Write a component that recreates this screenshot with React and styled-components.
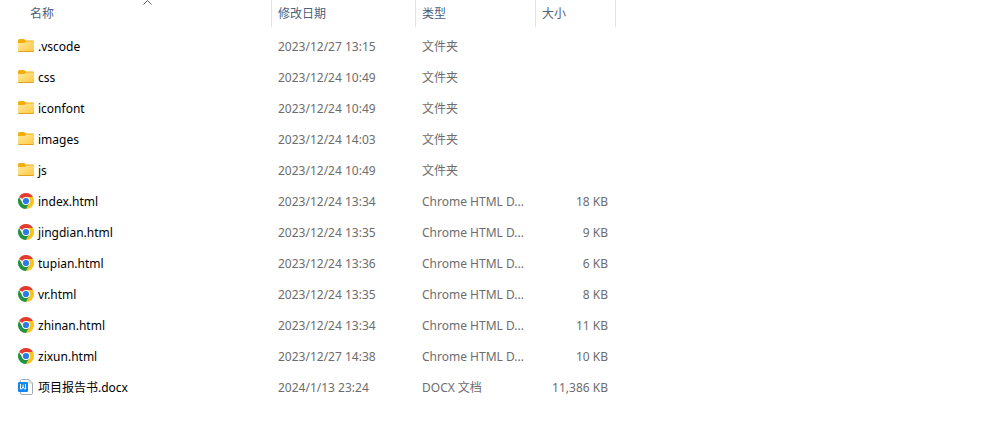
import React from "react";
import styled, { createGlobalStyle } from "styled-components";

const files = [
  { name: ".vscode", date: "2023/12/27 13:15", kind: "folder" },
  { name: "css", date: "2023/12/24 10:49", kind: "folder" },
  { name: "iconfont", date: "2023/12/24 10:49", kind: "folder" },
  { name: "images", date: "2023/12/24 14:03", kind: "folder" },
  { name: "js", date: "2023/12/24 10:49", kind: "folder" },
  { name: "index.html", date: "2023/12/24 13:34", kind: "html", size: "18 KB" },
  { name: "jingdian.html", date: "2023/12/24 13:35", kind: "html", size: "9 KB" },
  { name: "tupian.html", date: "2023/12/24 13:36", kind: "html", size: "6 KB" },
  { name: "vr.html", date: "2023/12/24 13:35", kind: "html", size: "8 KB" },
  { name: "zhinan.html", date: "2023/12/24 13:34", kind: "html", size: "11 KB" },
  { name: "zixun.html", date: "2023/12/27 14:38", kind: "html", size: "10 KB" },
  { name: "项目报告书.docx", date: "2024/1/13 23:24", kind: "docx", size: "11,386 KB" },
];

const FolderIcon = () => (
  <Icon viewBox="0 0 16 16" aria-hidden="true">
    <defs>
      <linearGradient id="folder" x1="0" y1="0" x2="1" y2="1">
        <stop offset="0" stopColor="#ffe8a0" />
        <stop offset="1" stopColor="#fdc93f" />
      </linearGradient>
    </defs>
    <path d="M0 2.5Q0 1 1.5 1H6L8 2.5H15Q16 2.5 16 3.5V7H0Z" fill="#f4ae0c" />
    <path d="M0 5H6.5L8.5 3.5H16V13Q16 14 15 14H1Q0 14 0 13Z" fill="url(#folder)" />
    <path d="M0 12.6Q0 14 1.2 14H14.8Q16 14 16 12.6Q15.8 13 15 13H1Q0.2 13 0 12.6Z" fill="#e5a01c" />
  </Icon>
);

const ChromeIcon = () => (
  <Icon viewBox="0 0 16 16" aria-hidden="true">
    <path d="M8 8L1.07 4A8 8 0 0 1 14.93 4Z" fill="#e33b2e" />
    <path d="M8 4H14.93A8 8 0 0 1 8 16L11.46 10Z" fill="#fcc31e" />
    <path d="M1.07 4L4.54 10L8 12L11.46 10L8 16A8 8 0 0 1 1.07 4Z" fill="#229342" />
    <circle cx="8" cy="8" r="4" fill="#fff" />
    <circle cx="8" cy="8" r="3.1" fill="#2a7bea" />
  </Icon>
);

const DocIcon = () => (
  <Icon viewBox="0 0 16 16" aria-hidden="true">
    <path
      d="M3.5 .5H11L14.5 4V14Q14.5 15.5 13 15.5H4Q2.5 15.5 2.5 14V1.5Q2.5 .5 3.5 .5Z"
      fill="#fff"
      stroke="#a3abb8"
    />
    <path d="M11 .5V4H14.5" fill="none" stroke="#c3c9d2" />
    <rect x="0" y="3" width="10" height="10" rx="1" fill="#1587f2" />
    <path d="M2.5 5V10H3.5L5 8L6.5 10H7.5V5M5 5.5V8" fill="none" stroke="#fff" />
  </Icon>
);

const kinds = {
  folder: { label: "文件夹", icon: FolderIcon },
  html: { label: "Chrome HTML D...", icon: ChromeIcon },
  docx: { label: "DOCX 文档", icon: DocIcon },
};

const FileRow = ({ file }) => {
  const { label, icon: KindIcon } = kinds[file.kind];

  return (
    <tr>
      <NameCell>
        <FileName>
          <KindIcon />
          <span>{file.name}</span>
        </FileName>
      </NameCell>
      <Cell>{file.date}</Cell>
      <Cell>{label}</Cell>
      <Cell $align="right">{file.size}</Cell>
      <td></td>
    </tr>
  );
};

const App = () => {
  return (
    <>
      <GlobalStyle />
      <FileTable>
        <colgroup>
          <Col $width={272} />
          <Col $width={144} />
          <Col $width={120} />
          <Col $width={80} />
          <col />
        </colgroup>
        <thead>
          <tr>
            <HeadCell $indent aria-sort="ascending">
              <SortButton type="button">
                名称
                <SortMark viewBox="0 0 9 5" aria-hidden="true">
                  <path d="M.5 4.5L4.5 .5L8.5 4.5" />
                </SortMark>
              </SortButton>
            </HeadCell>
            <HeadCell>
              <SortButton type="button">修改日期</SortButton>
            </HeadCell>
            <HeadCell>
              <SortButton type="button">类型</SortButton>
            </HeadCell>
            <HeadCell>
              <SortButton type="button">大小</SortButton>
            </HeadCell>
            <td></td>
          </tr>
        </thead>
        <Body>
          {files.map((file) => (
            <FileRow key={file.name} file={file} />
          ))}
        </Body>
      </FileTable>
    </>
  );
};

export default App;

const GlobalStyle = createGlobalStyle`
  body {
    margin: 0;
    background: #fff;
    font-family: "Noto Sans", "Noto Sans CJK SC", sans-serif;
    font-size: 12px;
    line-height: 16px;
  }
`;

const FileTable = styled.table`
  width: 100%;
  table-layout: fixed;
  border-spacing: 0;
`;

const Col = styled.col`
  width: ${({ $width }) => $width}px;
`;

const HeadCell = styled.th`
  height: 27px;
  padding: 0 0 0 ${({ $indent }) => ($indent ? "24px" : "0")};
  border-right: 1px solid #e2e2e2;
  box-sizing: border-box;
  font-weight: normal;
`;

const SortButton = styled.button`
  position: relative;
  display: block;
  width: 100%;
  height: 27px;
  padding: 0 6px;
  border: 0;
  background: none;
  color: #4c607a;
  font: inherit;
  text-align: left;
`;

const SortMark = styled.svg`
  position: absolute;
  top: 0;
  left: 50%;
  width: 9px;
  height: 5px;
  margin-left: -5px;
  fill: none;
  stroke: #5c5c5c;
`;

const Body = styled.tbody`
  &::before {
    content: "";
    display: table-row;
    height: 4px;
  }
`;

const Cell = styled.td`
  height: 31px;
  padding: 0 ${({ $align }) => ($align ? "8px" : "6px")} 0 6px;
  box-sizing: border-box;
  color: #6d6d6d;
  text-align: ${({ $align }) => $align || "left"};
  white-space: nowrap;
`;

const NameCell = styled(Cell)`
  padding-left: 18px;
  color: #000;
`;

const FileName = styled.div`
  display: flex;
  align-items: flex-start;
  gap: 4px;
  line-height: 18px;
`;

const Icon = styled.svg`
  flex: none;
  width: 16px;
  height: 16px;
`;
